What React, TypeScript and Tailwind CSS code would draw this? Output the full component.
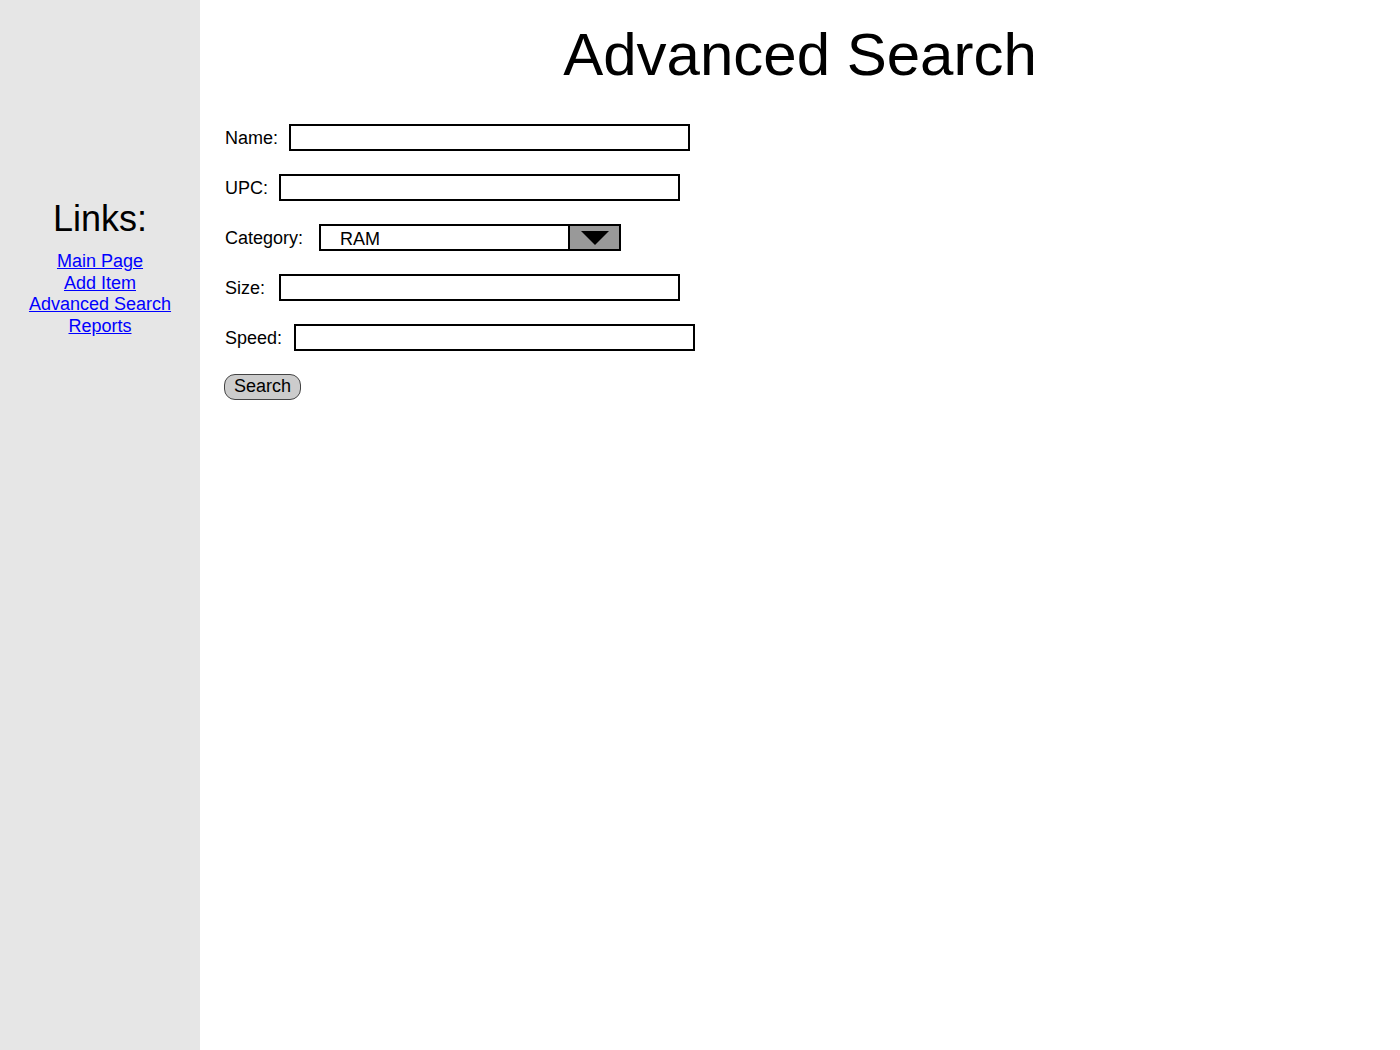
import { useState } from "react"

interface Campo {
    rotulo: string
    margem: string
}

const campos: Array<Campo> = [
    { rotulo: "Name:", margem: "ml-[11px]" },
    { rotulo: "UPC:", margem: "ml-[11px]" },
]

const camposFim: Array<Campo> = [
    { rotulo: "Size:", margem: "ml-[14px]" },
    { rotulo: "Speed:", margem: "ml-[12px]" },
]

function Linha({ rotulo, margem }: Campo) {
    return (
        <div className="flex flex-row items-center h-[27px]">
            <label className="text-[18px] text-black pt-[2px]">{rotulo}</label>
            <input className={`${margem} w-[401px] h-[27px] border-2 border-black bg-white outline-none px-1 text-[18px]`} />
        </div>
    )
}

export default function App() {
    const [categoria] = useState("RAM")

    return (
        <div className="flex flex-row w-full min-h-[1050px] bg-white" style={{ fontFamily: '"Liberation Sans", Arial, sans-serif' }}>
            <div className="flex flex-col items-center w-[200px] shrink-0 bg-[#e6e6e6] pt-[201px]">
                <h2 className="text-[36px] leading-[36px] text-black">Links:</h2>
                <div className="flex flex-col items-center mt-[14px] text-[18px] leading-[21.6px]">
                    <a href="#" className="text-[#0000ff] underline">Main Page</a>
                    <a href="#" className="text-[#0000ff] underline">Add Item</a>
                    <a href="#" className="text-[#0000ff] underline">Advanced Search</a>
                    <a href="#" className="text-[#0000ff] underline">Reports</a>
                </div>
            </div>

            <div className="flex flex-col flex-1">
                <h1 className="text-center text-[60px] leading-[60px] pt-[25px] text-black">Advanced Search</h1>

                <div className="flex flex-col gap-[23px] pl-[25px] mt-[39px]">
                    {campos.map((c) => (
                        <Linha key={c.rotulo} {...c} />
                    ))}

                    <div className="flex flex-row items-center h-[27px]">
                        <label className="text-[18px] text-black pt-[2px]">Category:</label>
                        <div className="flex flex-row ml-[16px] w-[302px] h-[27px] border-2 border-black bg-white">
                            <div className="flex-1 flex items-center pl-[19px] pt-[2px] text-[18px] leading-none">{categoria}</div>
                            <div className="flex items-center justify-center w-[51px] bg-[#999999] border-l-2 border-black">
                                <svg width="28" height="14" viewBox="0 0 28 14">
                                    <polygon points="0,0 28,0 14,14" fill="#000" />
                                </svg>
                            </div>
                        </div>
                    </div>

                    {camposFim.map((c) => (
                        <Linha key={c.rotulo} {...c} />
                    ))}

                    <div className="flex flex-row -ml-[1px]">
                        <button className="h-[26px] px-[9px] pb-[2px] text-[18px] leading-none bg-[#cccccc] border border-[#444444] rounded-[11px] text-black">
                            Search
                        </button>
                    </div>
                </div>
            </div>
        </div>
    )
}
